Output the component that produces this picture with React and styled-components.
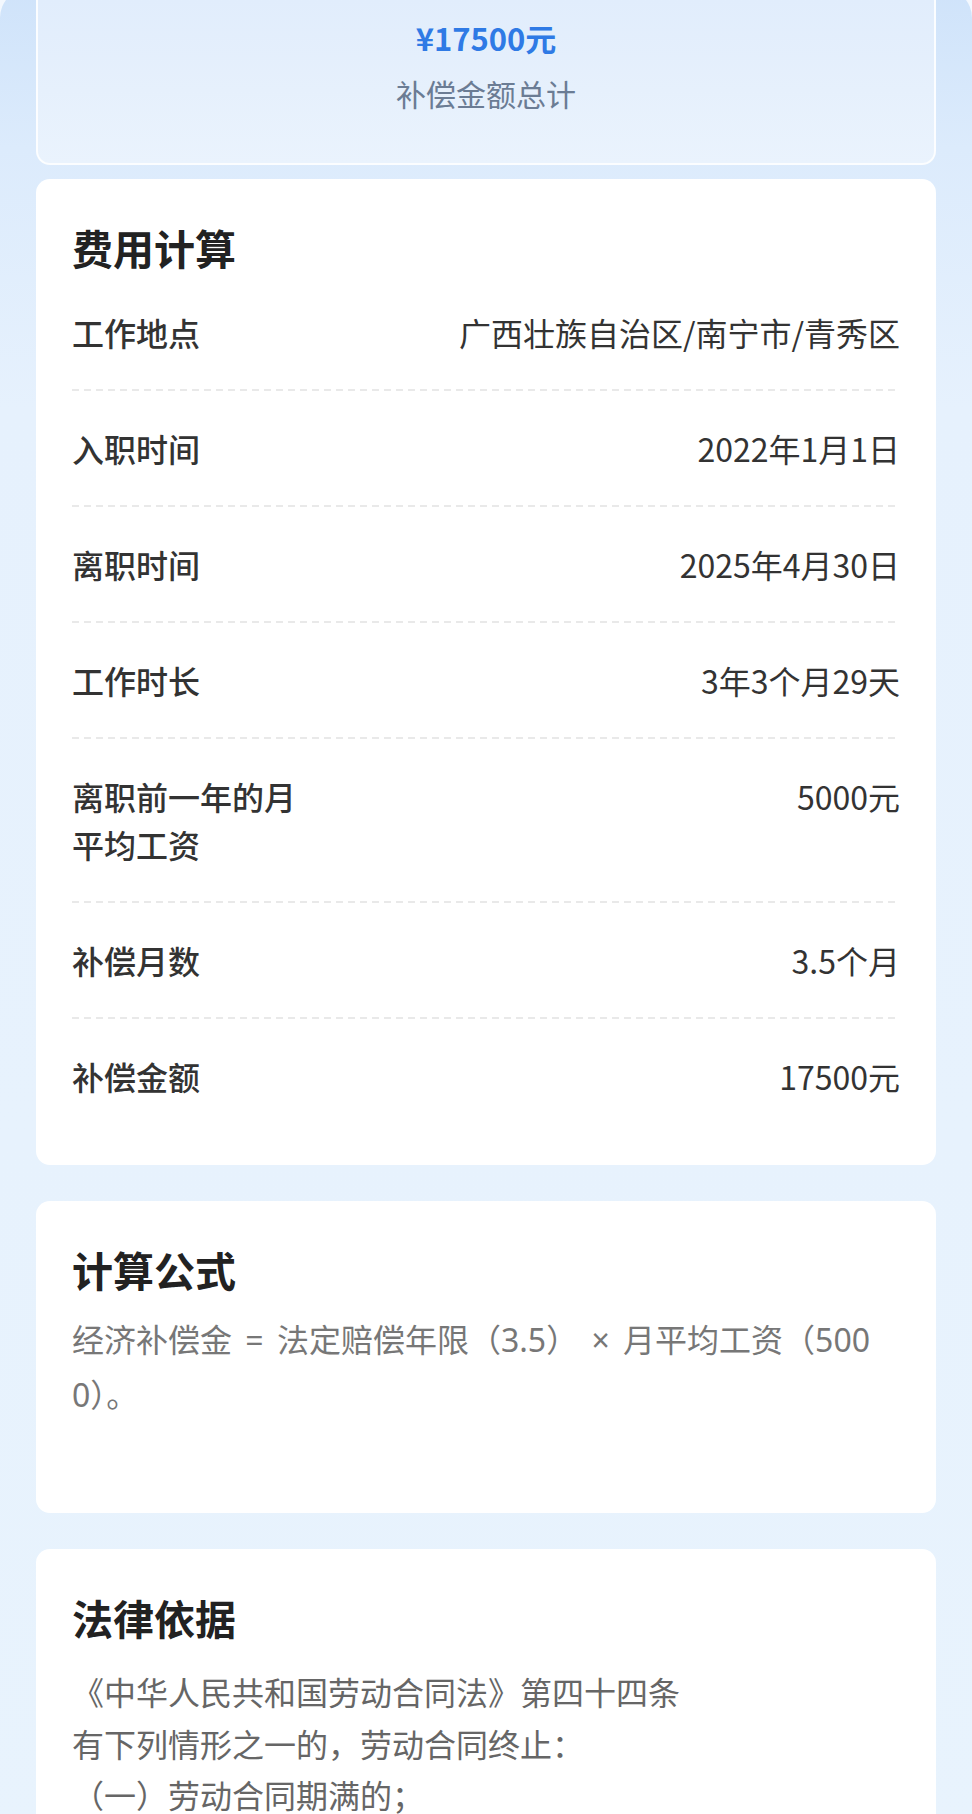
import React from "react";
import styled, { createGlobalStyle } from "styled-components";

const GlobalStyle = createGlobalStyle`
  html, body {
    margin: 0;
    padding: 0;
    background: #f3f8fe;
  }
  body {
    font-family: "Noto Sans CJK SC", "Noto Sans", sans-serif;
    -webkit-font-smoothing: antialiased;
  }
  * { box-sizing: border-box; }
`;

const Page = styled.main`
  margin-top: -12px;
  border-radius: 30px 30px 0 0;
  background: linear-gradient(180deg, #cfe3fa 0px, #dcebfc 160px, #e6f1fd 420px, #e8f3fd 100%);
  padding: 12px 36px 0;
  min-height: 1830px;
  display: flex;
  flex-direction: column;
`;

const SummaryCard = styled.section`
  height: 165px;
  border: 2px solid rgba(255, 255, 255, 0.85);
  border-top: none;
  border-radius: 0 0 14px 14px;
  background: linear-gradient(180deg, #e1edfc 0%, #e6f0fc 55%, #eaf3fd 100%);
  display: flex;
  flex-direction: column;
  align-items: center;
  padding-top: 16px;
`;

const Amount = styled.div`
  font-size: 31px;
  line-height: 44px;
  font-weight: 700;
  color: #2f7ae5;
`;

const SummaryLabel = styled.div`
  margin-top: 11px;
  font-size: 30px;
  line-height: 44px;
  color: #6b7c94;
`;

const Card = styled.section`
  margin-top: ${(p) => p.$gap}px;
  background: #ffffff;
  border-radius: 14px;
  padding: 41px 36px ${(p) => p.$pb}px;
`;

const CardTitle = styled.h2`
  margin: 0 0 1px;
  font-size: 41px;
  line-height: 54px;
  font-weight: 700;
  color: #222222;
`;

const Row = styled.div`
  display: flex;
  justify-content: space-between;
  align-items: flex-start;
  gap: 24px;
  padding: 33px 0 ${(p) => (p.$divider ? 35 : 33)}px;
  font-size: 32px;
  line-height: 48px;
  background-image: ${(p) =>
    p.$divider
      ? "linear-gradient(90deg, #e9e9e9 0, #e9e9e9 7px, transparent 7px, transparent 12px)"
      : "none"};
  background-size: 12px 2px;
  background-repeat: repeat-x;
  background-position: left bottom;
`;

const Label = styled.div`
  flex: 0 0 auto;
  max-width: 232px;
  font-weight: 500;
  color: #333333;
`;

const Value = styled.div`
  flex: 1 1 auto;
  text-align: right;
  color: #333333;
`;

const Formula = styled.p`
  margin: 16px 0 59px;
  font-family: "Noto Sans", "Noto Sans CJK SC", sans-serif;
  font-size: 32px;
  line-height: 55px;
  word-spacing: 5px;
  color: #777777;
  word-break: break-all;
`;

const LawText = styled.div`
  margin-top: 22px;
  font-size: 32px;
  line-height: 51.5px;
  color: #666666;
`;

const LawLine = styled.p`
  margin: 0;
`;

const rows = [
  ["工作地点", "广西壮族自治区/南宁市/青秀区"],
  ["入职时间", "2022年1月1日"],
  ["离职时间", "2025年4月30日"],
  ["工作时长", "3年3个月29天"],
  ["离职前一年的月平均工资", "5000元"],
  ["补偿月数", "3.5个月"],
  ["补偿金额", "17500元"],
];

const law = [
  "《中华人民共和国劳动合同法》第四十四条",
  "有下列情形之一的，劳动合同终止：",
  "（一）劳动合同期满的；",
];

export default function App() {
  return (
    <>
      <GlobalStyle />
      <Page>
        <SummaryCard>
          <Amount>¥17500元</Amount>
          <SummaryLabel>补偿金额总计</SummaryLabel>
        </SummaryCard>

        <Card $gap={14} $pb={32}>
          <CardTitle>费用计算</CardTitle>
          {rows.map(([k, v], i) => (
            <Row key={k} $divider={i < rows.length - 1}>
              <Label>{k}</Label>
              <Value>{v}</Value>
            </Row>
          ))}
        </Card>

        <Card $gap={36} $pb={32}>
          <CardTitle>计算公式</CardTitle>
          <Formula>经济补偿金 = 法定赔偿年限（3.5） × 月平均工资（5000）。</Formula>
        </Card>

        <Card $gap={36} $pb={40}>
          <CardTitle>法律依据</CardTitle>
          <LawText>
            {law.map((l) => (
              <LawLine key={l}>{l}</LawLine>
            ))}
          </LawText>
        </Card>
      </Page>
    </>
  );
}
